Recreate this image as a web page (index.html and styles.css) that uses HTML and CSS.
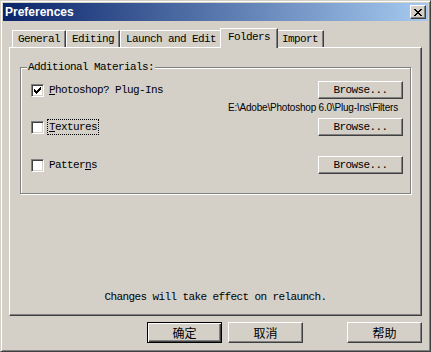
FILE: index.html
```html
<!DOCTYPE html>
<html lang="en">
<head>
    <meta charset="UTF-8">
    <title>Preferences</title>
    <link rel="stylesheet" href="styles.css">
</head>
<body>
    <div class="window">
        <div class="titlebar">
            <span class="title">Preferences</span>
            <button class="close" type="button">
                <svg width="8" height="7" viewBox="0 0 8 7" shape-rendering="crispEdges">
                    <path d="M0 0h2v1h-2z M6 0h2v1h-2z M1 1h2v1h-2z M5 1h2v1h-2z M2 2h4v1h-4z M3 3h2v1h-2z M2 4h4v1h-4z M1 5h2v1h-2z M5 5h2v1h-2z M0 6h2v1h-2z M6 6h2v1h-2z" fill="#000"/>
                </svg>
            </button>
        </div>

        <div class="body">
            <div class="tabs">
                <div class="tab">General</div>
                <div class="tab">Editing</div>
                <div class="tab">Launch and Edit</div>
                <div class="tab active">Folders</div>
                <div class="tab">Import</div>
            </div>

            <div class="panel">
                <fieldset class="group">
                    <legend>Additional Materials:</legend>

                    <div class="row">
                        <label class="check">
                            <span class="box">
                                <svg width="7" height="7" viewBox="0 0 7 7" shape-rendering="crispEdges">
                                    <path d="M6 0h1v1h-1z M5 1h2v1h-2z M0 2h1v1h-1z M4 2h3v1h-3z M0 3h2v1h-2z M3 3h3v1h-3z M0 4h5v1h-5z M1 5h3v1h-3z M2 6h1v1h-1z" fill="#000"/>
                                </svg>
                            </span>
                            <span class="label"><u>P</u>hotoshop? Plug-Ins</span>
                        </label>
                        <button class="btn browse" type="button">Browse...</button>
                    </div>
                    <div class="path">E:\Adobe\Photoshop 6.0\Plug-Ins\Filters</div>

                    <div class="row row-second">
                        <label class="check">
                            <span class="box"></span>
                            <span class="label focus"><u>T</u>extures</span>
                        </label>
                        <button class="btn browse" type="button">Browse...</button>
                    </div>

                    <div class="row row-third">
                        <label class="check">
                            <span class="box"></span>
                            <span class="label">Patter<u>n</u>s</span>
                        </label>
                        <button class="btn browse" type="button">Browse...</button>
                    </div>
                </fieldset>

                <p class="note">Changes will take effect on relaunch.</p>
            </div>

            <div class="actions">
                <button class="btn action default" type="button">确定</button>
                <button class="btn action" type="button">取消</button>
                <button class="btn action help" type="button">帮助</button>
            </div>
        </div>
    </div>
</body>
</html>
```

FILE: styles.css
```css
body {
    margin: 0;
    background-color: #d4d0c8;
    font-family: "Liberation Mono", monospace;
    font-size: 11px;
    letter-spacing: -0.6px;
    color: #000;
}

.window {
    width: 431px;
    height: 352px;
    box-sizing: border-box;
    border: 1px solid;
    border-color: #d4d0c8 #404040 #404040 #d4d0c8;
    box-shadow: inset 1px 1px #fff, inset -1px -1px #808080;
    padding: 2px;
    display: flex;
    flex-direction: column;
}

.titlebar {
    height: 18px;
    background: linear-gradient(to right, #0a246a, #a6caf0);
    display: flex;
    align-items: center;
    justify-content: space-between;
    padding: 0 2px 0 2px;
}

.title {
    color: #fff;
    font-family: "Liberation Sans", Arial, sans-serif;
    font-weight: bold;
    font-size: 12px;
    letter-spacing: 0;
}

.close {
    width: 16px;
    height: 14px;
    box-sizing: border-box;
    padding: 0;
    border: 1px solid;
    border-color: #fff #404040 #404040 #fff;
    box-shadow: inset -1px -1px #808080;
    background: #d4d0c8;
    display: flex;
    align-items: center;
    justify-content: center;
}

.close svg {
    display: block;
    margin-left: -1px;
}

.body {
    flex: 1;
    padding: 7px 6px 0;
    display: flex;
    flex-direction: column;
}

/* tab strip */
.tabs {
    display: flex;
    align-items: flex-end;
    padding-left: 3px;
    height: 19px;
}

.tab {
    height: 17px;
    box-sizing: border-box;
    padding: 0 5px;
    border: 1px solid;
    border-color: #fff #404040 transparent #fff;
    border-bottom: 0;
    box-shadow: inset -1px 0 #808080;
    line-height: 16px;
    white-space: nowrap;
}

.tab.active {
    height: 20px;
    margin: 0 -2px -1px;
    padding: 0 7px;
    position: relative;
    background: #d4d0c8;
}

.panel {
    height: 269px;
    box-sizing: border-box;
    border: 1px solid;
    border-color: #fff #404040 #404040 #fff;
    box-shadow: inset -1px -1px #808080;
    display: flex;
    flex-direction: column;
}

/* group box */
.group {
    margin: 13px 10px 0;
    border: 1px solid #808080;
    box-shadow: inset 1px 1px #fff, 1px 1px #fff;
    padding: 7px 7px 19px 10px;
    min-width: 0;
}

.group legend {
    margin-left: -4px;
    padding: 0 1px;
    line-height: 13px;
    background: #d4d0c8;
}

.row {
    height: 18px;
    display: flex;
    align-items: center;
    justify-content: space-between;
}

.row-second {
    margin-top: 3px;
}

.row-third {
    margin-top: 20px;
}

.check {
    display: flex;
    align-items: center;
    gap: 4px;
}

.box {
    width: 13px;
    height: 13px;
    box-sizing: border-box;
    padding: 2px;
    border: 1px solid;
    border-color: #808080 #fff #fff #808080;
    box-shadow: inset 1px 1px #404040, inset -1px -1px #d4d0c8;
    background: #fff;
}

.box svg {
    display: block;
}

.label {
    padding: 0 1px;
    line-height: 14px;
}

.label u {
    text-underline-offset: 1px;
}

.label.focus {
    outline: 1px dotted #000;
}

.path {
    margin-top: 2px;
    line-height: 14px;
    text-align: right;
    padding-right: 5px;
    font-family: "Liberation Sans", Arial, sans-serif;
    font-size: 10px;
    letter-spacing: -0.2px;
}

.note {
    margin: auto 0 11px;
    text-align: center;
    line-height: 13px;
}

/* buttons */
.btn {
    box-sizing: border-box;
    border: 1px solid;
    border-color: #fff #404040 #404040 #fff;
    box-shadow: inset -1px -1px #808080;
    background: #d4d0c8;
    color: #000;
    padding: 0;
    font-family: "Liberation Mono", monospace;
    font-size: 11px;
    letter-spacing: -0.6px;
}

.browse {
    width: 85px;
    height: 18px;
}

.actions {
    display: flex;
    justify-content: flex-end;
    gap: 6px;
    margin-top: 6px;
}

.action {
    width: 75px;
    height: 21px;
    font-family: "Noto Sans CJK SC", sans-serif;
    font-size: 12px;
    letter-spacing: 0;
}

.action.default {
    border: 1px solid #000;
    box-shadow: inset 1px 1px #fff, inset -1px -1px #404040, inset -2px -2px #808080;
}

.action.help {
    margin-left: 38px;
}
```
